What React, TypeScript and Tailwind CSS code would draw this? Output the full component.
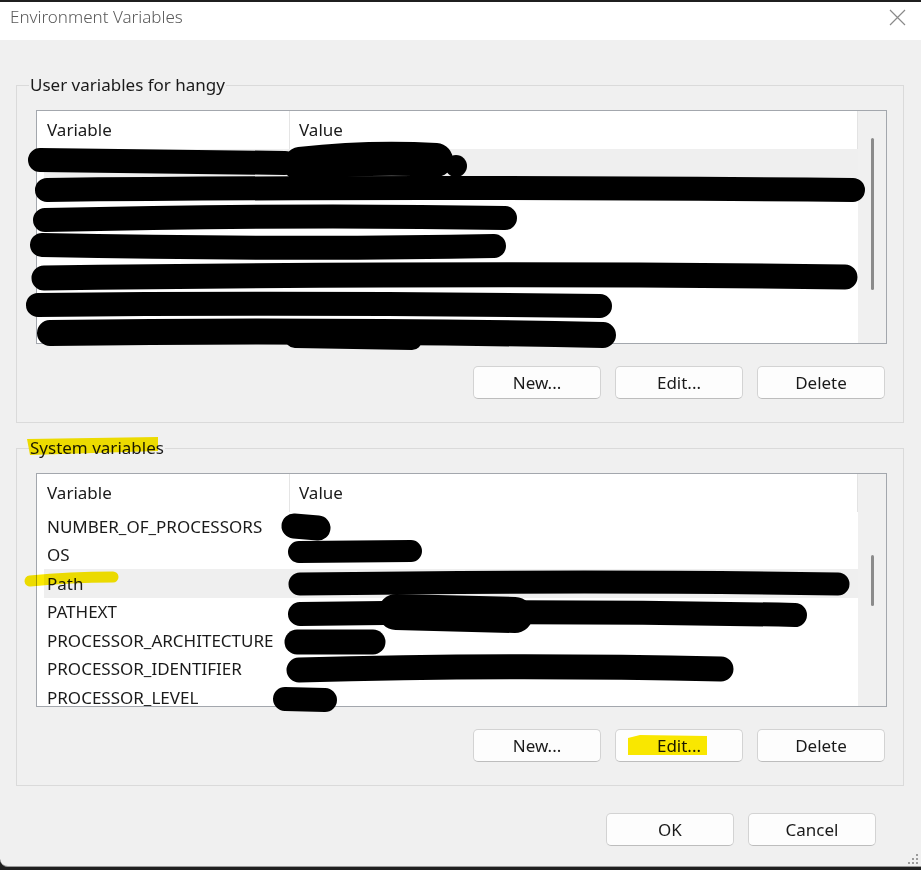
import React from 'react';

const font = { fontFamily: '"Noto Sans", "Open Sans", Arial, sans-serif' };

const systemRows = [
  'NUMBER_OF_PROCESSORS',
  'OS',
  'Path',
  'PATHEXT',
  'PROCESSOR_ARCHITECTURE',
  'PROCESSOR_IDENTIFIER',
  'PROCESSOR_LEVEL',
];

const userRows = ['', '', '', '', '', '', ''];

// list box with a header, rows and a thin scrollbar on the right
function VarList({ rows, selected, thumbTop, thumbHeight }: { rows: string[]; selected: number; thumbTop: string; thumbHeight: string }) {
  return (
    <div className="flex h-[234px] w-[851px] overflow-hidden border border-[#a3a7ad] bg-white">
      <div className="flex min-w-0 flex-1 flex-col">
        <div className="flex h-[38px] shrink-0 border-r border-[#e3e3e3] text-[17px] text-[#1a1a1a]">
          <div className="flex w-[253px] items-center border-r border-[#e5e5e5] pl-[10px]">Variable</div>
          <div className="flex items-center pl-[9px]">Value</div>
        </div>
        {rows.map((r, i) => (
          <div
            key={i}
            className={`ml-[7px] flex h-[28.5px] shrink-0 items-center pl-[3px] text-[17px] text-[#1a1a1a] ${i === selected ? 'bg-[#efefef]' : ''}`}
          >
            {r}
          </div>
        ))}
      </div>
      <div className="w-[28px] shrink-0 bg-[#f0f0f0]">
        <div className={`mx-auto w-[3px] rounded-full bg-[#8b8b8b] ${thumbTop} ${thumbHeight}`} />
      </div>
    </div>
  );
}

function Btn({ label }: { label: string }) {
  return (
    <button className="flex h-[33px] w-[128px] items-center justify-center rounded-[5px] border border-[#d3d3d3] border-b-[#bdbdbd] bg-[#fdfdfd] text-[17px] text-[#1a1a1a]">
      {label}
    </button>
  );
}

function Group({ title, children }: { title: string; children: React.ReactNode }) {
  return (
    <fieldset className="w-[888px] border border-[#dadada] pb-[23px] pl-[19px] pr-[16px] pt-[14px]">
      <legend className="-ml-[7px] px-[1px] text-[17px] leading-[22px] text-[#1a1a1a]">{title}</legend>
      {children}
    </fieldset>
  );
}

export default function App() {
  return (
    <div className="relative h-[870px] w-[921px] overflow-hidden bg-[#1f1f1f]" style={font}>
      <div className="h-[2px]" />
      <div className="relative flex h-[865px] flex-col overflow-hidden rounded-bl-[8px] border-b border-[#9a9a9a] bg-[#f0f0f0]">
        {/* title bar */}
        <div className="flex h-[38px] shrink-0 items-start justify-between bg-white pl-[10px] pr-[15px] pt-[4px]">
          <span className="text-[17px] font-light leading-[22px] text-[#5a5a5a]">Environment Variables</span>
          <svg width="17" height="17" viewBox="0 0 17 17" className="mt-[3px]">
            <path d="M1 1 L16 16 M16 1 L1 16" stroke="#8a8a8a" strokeWidth="1.2" fill="none" />
          </svg>
        </div>

        <div className="flex flex-col pl-[16px] pt-[34px]">
          <Group title="User variables for hangy">
            <VarList rows={userRows} selected={0} thumbTop="mt-[27px]" thumbHeight="h-[152px]" />
            <div className="mt-[22px] flex justify-end gap-[14px] pr-[2px]">
              <Btn label="New..." />
              <Btn label="Edit..." />
              <Btn label="Delete" />
            </div>
          </Group>

          <div className="h-[14px]" />

          <Group title="System variables">
            <VarList rows={systemRows} selected={2} thumbTop="mt-[81px]" thumbHeight="h-[51px]" />
            <div className="mt-[22px] flex justify-end gap-[14px] pr-[2px]">
              <Btn label="New..." />
              <Btn label="Edit..." />
              <Btn label="Delete" />
            </div>
          </Group>

          <div className="mt-[27px] flex justify-end gap-[14px] pr-[45px]">
            <Btn label="OK" />
            <Btn label="Cancel" />
          </div>
        </div>

        {/* resize grip */}
        <svg width="12" height="12" className="absolute bottom-[1px] right-[2px]">
          {[[9, 1], [5, 5], [9, 5], [1, 9], [5, 9], [9, 9]].map(([x, y], i) => (
            <rect key={i} x={x} y={y} width="2" height="2" fill="#9c9c9c" />
          ))}
        </svg>
      </div>

      {/* highlighter marks */}
      <svg className="pointer-events-none absolute inset-0 mix-blend-multiply" width="921" height="870">
        <g fill="#fbe900">
          <path d="M27 439 L158 437 L158 451 L30 455 Z" />
          <path d="M628 738 L640 735 L707 736 L707 755 L628 755 Z" />
        </g>
        <path d="M30 581 Q70 577 113 577" stroke="#fbe900" strokeWidth="11" fill="none" strokeLinecap="round" />
      </svg>

      {/* redaction scribbles */}
      <svg className="pointer-events-none absolute inset-0" width="921" height="870">
        <g stroke="#000" fill="none" strokeLinecap="round" strokeLinejoin="round">
          <path d="M40 160 L285 163" strokeWidth="24" />
          <path d="M300 164 Q370 156 436 160" strokeWidth="34" />
          <path d="M47 190 Q400 186 853 190" strokeWidth="24" />
          <path d="M45 220 Q300 214 505 218" strokeWidth="24" />
          <path d="M42 245 Q300 250 494 246" strokeWidth="24" />
          <path d="M44 278 Q500 272 845 277" strokeWidth="25" />
          <path d="M38 305 Q300 302 600 306" strokeWidth="24" />
          <path d="M50 333 Q300 329 603 335" strokeWidth="26" />
          <path d="M295 338 L412 340" strokeWidth="20" />

          <path d="M294 526 L318 528" strokeWidth="25" />
          <path d="M299 552 L411 551" strokeWidth="22" />
          <path d="M300 584 Q600 580 838 584" strokeWidth="23" />
          <path d="M300 614 Q550 610 795 615" strokeWidth="24" />
          <path d="M396 612 L515 615" strokeWidth="36" />
          <path d="M297 642 L373 642" strokeWidth="25" />
          <path d="M299 670 Q500 664 721 669" strokeWidth="25" />
          <path d="M285 699 L325 700" strokeWidth="24" />
        </g>
        <circle cx="456" cy="166" r="11" fill="#000" />
      </svg>
    </div>
  );
}
